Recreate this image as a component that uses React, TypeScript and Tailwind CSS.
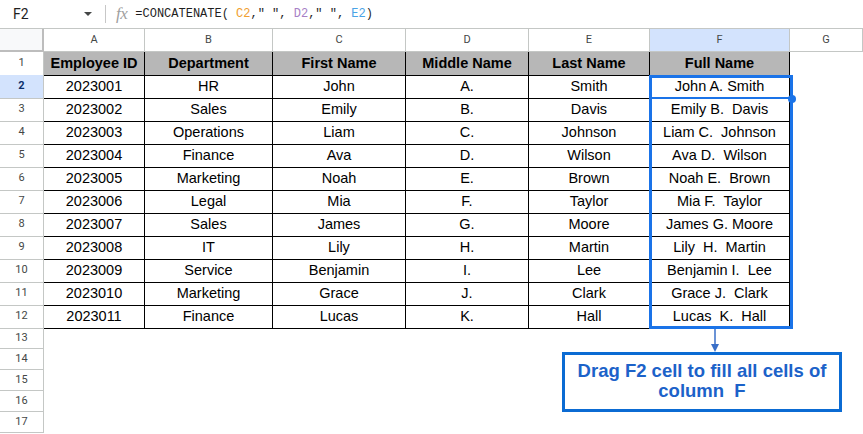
import React from "react";

const cols = ["A", "B", "C", "D", "E", "F", "G"];

const rows: string[][] = [
  ["Employee ID", "Department", "First Name", "Middle Name", "Last Name", "Full Name"],
  ["2023001", "HR", "John", "A.", "Smith", "John A. Smith"],
  ["2023002", "Sales", "Emily", "B.", "Davis", "Emily B.  Davis"],
  ["2023003", "Operations", "Liam", "C.", "Johnson", "Liam C.  Johnson"],
  ["2023004", "Finance", "Ava", "D.", "Wilson", "Ava D.  Wilson"],
  ["2023005", "Marketing", "Noah", "E.", "Brown", "Noah E.  Brown"],
  ["2023006", "Legal", "Mia", "F.", "Taylor", "Mia F.  Taylor"],
  ["2023007", "Sales", "James", "G.", "Moore", "James G. Moore"],
  ["2023008", "IT", "Lily", "H.", "Martin", "Lily  H.  Martin"],
  ["2023009", "Service", "Benjamin", "I.", "Lee", "Benjamin I.  Lee"],
  ["2023010", "Marketing", "Grace", "J.", "Clark", "Grace J.  Clark"],
  ["2023011", "Finance", "Lucas", "K.", "Hall", "Lucas  K.  Hall"],
];

const gridCols = "grid grid-cols-[44px_101px_128px_133px_123px_121px_140px_1fr]";

export default function App() {
  return (
    <div className="relative w-[863px] h-[434px] overflow-hidden bg-white font-['Liberation_Sans',Arial,sans-serif]">
      {/* formula bar */}
      <div className="flex items-center h-[28px] text-[#1f1f1f]">
        <div className="w-[105px] flex items-center pl-[13px] pr-[12px]">
          <span className="text-[14px] font-['Roboto',sans-serif]">F2</span>
          <span className="ml-auto">
            <svg width="10" height="6" viewBox="0 0 10 6">
              <path d="M1 1 L9 1 L5 5 Z" fill="#444746" />
            </svg>
          </span>
        </div>
        <div className="w-px h-[18px] bg-[#c7c7c7]" />
        <span className="ml-[10px] text-[17px] italic text-[#a0a0a0] font-['Liberation_Serif',serif] tracking-[-0.5px]">fx</span>
        <span className="ml-[8px] text-[12px] whitespace-pre font-['Liberation_Mono',monospace] text-[#1f1f1f]">
          =CONCATENATE( <span className="text-[#f0a030]">C2</span>," ", <span className="text-[#a77fc6]">D2</span>," ", <span className="text-[#4aa3e6]">E2</span>)
        </span>
      </div>

      {/* column headers */}
      <div className={`${gridCols} border-t border-[#c4c7c5] h-[24px]`}>
        <div className="bg-[#f8f9fa] border-r-[2px] border-b-[2px] border-[#bdbdbd]" />
        {cols.map((c) => (
          <div
            key={c}
            className={`flex items-center justify-center border-r border-b border-[#c4c7c5] text-[11px] font-['Roboto',sans-serif] text-[#444746] ${
              c === "F" ? "bg-[#d3e3fd] text-[#1f1f1f]" : ""
            }`}
          >
            {c}
          </div>
        ))}
      </div>

      {/* data rows */}
      {rows.map((r, i) => {
        const isHeader = i === 0;
        const rowNum = i + 1;
        const selected = rowNum === 2;
        return (
          <div key={i} className={`${gridCols} h-[23px]`}>
            <div
              className={`flex items-center justify-center border-r border-b border-[#c4c7c5] text-[11px] font-['Roboto',sans-serif] ${
                selected ? "bg-[#d3e3fd] font-bold text-[#0b2f6b]" : "text-[#444746]"
              }`}
            >
              {rowNum}
            </div>
            {r.map((v, j) => (
              <div
                key={j}
                className={`flex items-center justify-center border-r border-b border-black text-[14.5px] text-black whitespace-pre pt-[1px] ${
                  isHeader ? "bg-[#b7b7b7] font-bold" : ""
                }`}
              >
                {v}
              </div>
            ))}
            <div />
          </div>
        );
      })}

      {/* empty rows */}
      {[13, 14, 15, 16, 17].map((n) => (
        <div key={n} className={`${gridCols} h-[21px]`}>
          <div className="flex items-center justify-center border-r border-b border-[#c4c7c5] text-[11px] font-['Roboto',sans-serif] text-[#444746]">
            {n}
          </div>
        </div>
      ))}

      {/* selection overlay */}
      <div className="absolute left-[649px] top-[75px] w-[144px] h-[254px] border-[3px] border-[#1a73e8] pointer-events-none" />
      <div className="absolute left-[650px] top-[97px] w-[142px] h-[2px] bg-[#1a73e8]" />
      <div className="absolute left-[788px] top-[95px] w-[8px] h-[8px] rounded-full bg-[#1a73e8]" />

      {/* arrow */}
      <svg className="absolute left-[709px] top-[329px]" width="12" height="24" viewBox="0 0 12 24">
        <line x1="6" y1="0" x2="6" y2="16" stroke="#3a6fc8" strokeWidth="1.5" />
        <path d="M2 15 L10 15 L6 23 Z" fill="#3a6fc8" />
      </svg>

      {/* callout */}
      <div className="absolute left-[562px] top-[352px] w-[280px] h-[60px] border-[3px] border-[#0b6bd3] bg-white flex items-center justify-center text-center pb-[3px]">
        <div className="text-[18.5px] leading-[20px] font-bold text-[#1c62c9] whitespace-pre">
          {"Drag F2 cell to fill all cells of\ncolumn  F"}
        </div>
      </div>
    </div>
  );
}
